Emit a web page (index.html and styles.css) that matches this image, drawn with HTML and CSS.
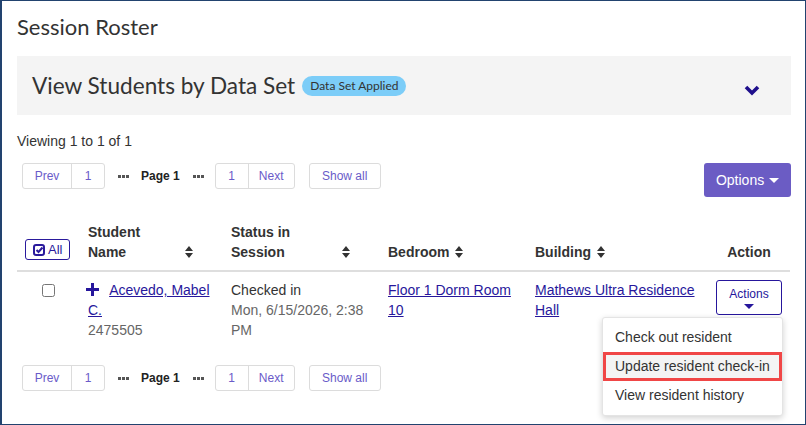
FILE: index.html
```html
<!DOCTYPE html>
<html lang="en">
<head>
  <meta charset="UTF-8" />
  <title>Session Roster</title>
  <link rel="stylesheet" href="styles.css">
</head>
<body>
<div class="page">
  <h1 class="title">Session Roster</h1>

  <div class="dataset">
    <span class="dataset-name">View Students by Data Set</span>
    <span class="badge">Data Set Applied</span>
    <svg class="chevron" width="16" height="11" viewBox="0 0 16 11"><polyline points="2,2 8,8 14,2" fill="none" stroke="#1f0f8c" stroke-width="3.6"/></svg>
  </div>

  <div class="viewing">Viewing 1 to 1 of 1</div>

  <div class="toolbar">
    <div class="pager">
      <div class="pgroup"><a class="pbtn prev">Prev</a><a class="pbtn num">1</a></div>
      <span class="dots"><i></i><i></i><i></i></span>
      <b class="pagelbl">Page 1</b>
      <span class="dots"><i></i><i></i><i></i></span>
      <div class="pgroup"><a class="pbtn num">1</a><a class="pbtn next">Next</a></div>
      <div class="pgroup showall"><a class="pbtn">Show all</a></div>
    </div>
    <button class="options">Options <span class="caret white"></span></button>
  </div>

  <table class="roster">
    <thead>
      <tr>
        <th class="c-check"><button class="allbtn"><svg width="12" height="12" viewBox="0 0 12 12"><rect x="1" y="1" width="10" height="10" rx="2" fill="none" stroke="#2a1a9c" stroke-width="2"/><polyline points="3.5,6 5.5,8 9.5,3.5" fill="none" stroke="#2a1a9c" stroke-width="2"/></svg>All</button></th>
        <th class="c-name"><div class="th-in split"><span class="lbl">Student Name</span><svg class="sort" width="8" height="12" viewBox="0 0 8 12"><path d="M4 0L8 5H0Z M0 7H8L4 12Z" fill="#333"/></svg></div></th>
        <th class="c-status"><div class="th-in split"><span class="lbl">Status in Session</span><svg class="sort" width="8" height="12" viewBox="0 0 8 12"><path d="M4 0L8 5H0Z M0 7H8L4 12Z" fill="#333"/></svg></div></th>
        <th class="c-room"><div class="th-in">Bedroom<svg class="sort" width="8" height="12" viewBox="0 0 8 12"><path d="M4 0L8 5H0Z M0 7H8L4 12Z" fill="#333"/></svg></div></th>
        <th class="c-bldg"><div class="th-in">Building<svg class="sort" width="8" height="12" viewBox="0 0 8 12"><path d="M4 0L8 5H0Z M0 7H8L4 12Z" fill="#333"/></svg></div></th>
        <th class="c-action">Action</th>
      </tr>
    </thead>
    <tbody>
      <tr>
        <td class="c-check"><input type="checkbox" class="rowcheck"></td>
        <td class="c-name">
          <svg class="plus" width="13" height="13" viewBox="0 0 13 13"><path d="M5 0h3v5h5v3H8v5H5V8H0V5h5z" fill="#26169c"/></svg>
          <a href="#">Acevedo, Mabel C.</a>
          <div class="muted">2475505</div>
        </td>
        <td class="c-status">Checked in<div class="muted">Mon, 6/15/2026, 2:38 PM</div></td>
        <td class="c-room"><a href="#">Floor 1 Dorm Room 10</a></td>
        <td class="c-bldg"><a href="#">Mathews Ultra Residence Hall</a></td>
        <td class="c-action">
          <div class="actions-wrap">
            <button class="actions">Actions<span class="caret navy"></span></button>
            <ul class="menu">
              <li>Check out resident</li>
              <li class="active">Update resident check-in</li>
              <li>View resident history</li>
            </ul>
          </div>
        </td>
      </tr>
    </tbody>
  </table>

  <div class="pager bottom">
    <div class="pgroup"><a class="pbtn prev">Prev</a><a class="pbtn num">1</a></div>
    <span class="dots"><i></i><i></i><i></i></span>
    <b class="pagelbl">Page 1</b>
    <span class="dots"><i></i><i></i><i></i></span>
    <div class="pgroup"><a class="pbtn num">1</a><a class="pbtn next">Next</a></div>
    <div class="pgroup showall"><a class="pbtn">Show all</a></div>
  </div>
</div>
</body>
</html>
```

FILE: styles.css
```css
html, body { margin: 0; padding: 0; background: #fff; }
body { font-family: "Liberation Sans", Arial, sans-serif; font-size: 14px; color: #333; }

.page {
  box-sizing: border-box;
  width: 806px; height: 425px;
  border: 1px solid #22436f;
  border-left-width: 2px;
  padding: 12px 14px 0 15px;
  overflow: hidden;
}

.title {
  margin: 0 0 15px;
  font-family: Lato, sans-serif; font-weight: 400;
  font-size: 22px; line-height: 28px; color: #333;
}

.dataset {
  display: flex; align-items: center;
  height: 59px; background: #f4f4f4;
  padding: 0 31px 0 15px;
}
.dataset-name { font-family: Lato, sans-serif; font-size: 22.6px; color: #333; }
.badge {
  margin-left: 7px; padding: 0 8px;
  height: 20px; line-height: 20px;
  background: #7ccdf8; border-radius: 10px;
  font-family: Lato, sans-serif; font-size: 12px; color: #333;
}
.chevron { margin-left: auto; margin-top: 10px; }

.viewing { margin-top: 16px; line-height: 20px; }

.toolbar { display: flex; justify-content: space-between; align-items: flex-start; margin-top: 12px; }

.pager { display: flex; align-items: center; margin-left: 5px; }
.pgroup {
  display: flex; height: 26px;
  border: 1px solid #dcdcdc; border-radius: 3px;
  box-sizing: border-box;
}
.pbtn {
  display: flex; align-items: center; justify-content: center;
  color: #6a5bc9; font-size: 12px; text-decoration: none;
}
.pbtn + .pbtn { border-left: 1px solid #dcdcdc; }
.prev { width: 48px; }
.next { width: 45px; }
.num { width: 32px; }
.showall { margin-left: 14px; }
.showall .pbtn { width: 70px; }
.pagelbl { font-size: 12px; color: #222; margin: 0 13px 0 12px; }
.dots { display: flex; gap: 1px; margin-left: 13px; }
.pagelbl + .dots { margin-left: 0; margin-right: 11px; }
.dots i { width: 3px; height: 3px; background: #555; }

.options {
  width: 87px; height: 34px;
  background: #6b5cc4; color: #fff;
  border: none; border-radius: 3px;
  font-family: "Liberation Sans", Arial, sans-serif; font-size: 14px;
  padding: 0;
}
.caret {
  display: inline-block; width: 0; height: 0;
  border-left: 5px solid transparent; border-right: 5px solid transparent;
  vertical-align: middle;
}
.caret.white { border-top: 5px solid #fff; margin-left: 1px; margin-top: -2px; }
.caret.navy { display: block; margin: 3px auto 0; border-top: 5px solid #26169c; }

/* column widths add up to 773px including 8px cell padding */
.roster { width: 773px; border-collapse: collapse; margin-top: 17px; table-layout: fixed; }
.roster th, .roster td { padding: 8px; text-align: left; line-height: 20px; }
.roster th { vertical-align: bottom; font-weight: bold; border-bottom: 2px solid #dedede; color: #333; }
.roster td { vertical-align: top; }

.c-check { width: 47px; }
.c-name { width: 127px; }
.c-status { width: 141px; }
.c-room { width: 131px; }
.c-bldg { width: 165px; }
.c-action { width: 66px; }
.roster th.c-name, .roster th.c-status { padding-right: 30px; }
.roster th.c-name { width: 105px; }
.roster th.c-status { width: 119px; }
.roster th.c-action { text-align: center; }
.roster td.c-action { text-align: right; }
.roster .c-check { text-align: center; }

.th-in { display: flex; align-items: flex-end; }
.th-in .sort { margin-left: 6px; margin-bottom: 4px; flex: none; }
.th-in.split { justify-content: space-between; }
.th-in.split .lbl { max-width: 75px; }

.allbtn {
  display: flex; align-items: center; gap: 3px;
  width: 45px; height: 21px; padding: 0 0 0 7px;
  background: #fff; border: 1px solid #2a1a9c; border-radius: 3px;
  color: #2a1a9c; font-family: "Liberation Sans", Arial, sans-serif; font-size: 13px;
  margin-bottom: 2px;
}

.rowcheck { width: 13px; height: 13px; margin: 4px 0 0; }

a { color: #27179c; text-decoration: underline; }
.plus { vertical-align: -1px; margin-right: 7px; margin-left: -2px; }
.muted { color: #666; }

.actions-wrap { position: relative; display: inline-block; }
.actions {
  width: 66px; height: 35px; padding: 0;
  background: #fff; border: 1px solid #26169c; border-radius: 3px;
  color: #26169c; font-family: "Liberation Sans", Arial, sans-serif; font-size: 12px;
}
.menu {
  position: absolute; right: -1px; top: 37px;
  width: 179px; margin: 0; padding: 5px 0;
  list-style: none; text-align: left;
  background: #fff; border: 1px solid #e4e4e4; border-radius: 3px;
  box-shadow: 0 2px 6px rgba(0,0,0,.18);
  z-index: 5;
}
.menu li { padding: 0 12px; line-height: 29px; color: #333; font-size: 14px; white-space: nowrap; }
.menu li.active { background: #f4f4f4; outline: 3px solid #f04646; outline-offset: -3px; }

.pager.bottom { margin-top: 17px; }
```
